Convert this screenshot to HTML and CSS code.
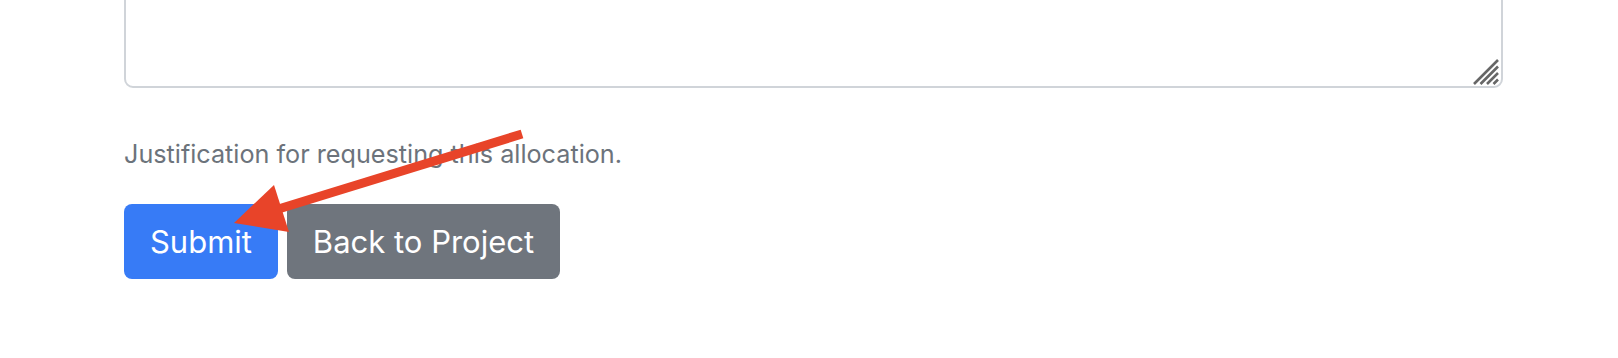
FILE: index.html
```html
<!DOCTYPE html>
<html>
<head>
  <meta name="viewport" content="width=device-width, initial-scale=1.0">
  <link rel="stylesheet" href="styles.css">
</head>
<body>
  <div class="page">
    <form class="allocation-form">
      <div class="field">
        <textarea class="field-input" name="justification"></textarea>
        <svg class="grip" width="26" height="26" viewBox="0 0 26 26">
          <path d="M1 25 L25 1 M7.5 25 L25 7.5 M14 25 L25 14 M20.5 25 L25 20.5" stroke="#676767" stroke-width="2.6"/>
        </svg>
      </div>
      <small class="field-help">Justification for requesting this allocation.</small>
      <div class="actions">
        <button type="submit" class="btn btn-primary">Submit</button>
        <a class="btn btn-secondary">Back to Project</a>
      </div>
    </form>

    <svg class="annotation" width="1618" height="358" viewBox="0 0 1618 358">
      <line x1="522" y1="134" x2="272" y2="211" stroke="#e84429" stroke-width="9"/>
      <polygon points="234,223 274,185 289,232" fill="#e84429"/>
    </svg>
  </div>
</body>
</html>
```

FILE: styles.css
```css
* {
  margin: 0;
  padding: 0;
  box-sizing: border-box;
  font-family: 'Inter', 'Liberation Sans', sans-serif;
}

body {
  background: #ffffff;
  overflow: hidden;
}

.page {
  position: relative;
  display: flow-root;
  width: 1618px;
  height: 358px;
  overflow: hidden;
}

.allocation-form {
  width: 1379px;
  margin-left: 124px;
}

.field {
  position: relative;
  margin-top: -112px;
}

.field-input {
  display: block;
  width: 100%;
  height: 200px;
  border: 2px solid #d0d4d9;
  border-radius: 9px;
  resize: none;
  outline: none;
}

.grip {
  position: absolute;
  right: 4px;
  bottom: 3px;
}

.field-help {
  display: block;
  margin-top: 50px;
  font-size: 25.2px;
  line-height: 32px;
  color: #6c737b;
}

.actions {
  display: flex;
  gap: 9px;
  margin-top: 34px;
}

.btn {
  display: inline-flex;
  align-items: center;
  justify-content: center;
  height: 75px;
  border: none;
  border-radius: 8px;
  font-size: 31px;
  color: #ffffff;
  white-space: nowrap;
  text-decoration: none;
}

.btn-primary {
  width: 154px;
  background: #377bf6;
}

.btn-secondary {
  width: 273px;
  background: #6f757d;
}

.annotation {
  position: absolute;
  top: 0;
  left: 0;
  pointer-events: none;
}
```
